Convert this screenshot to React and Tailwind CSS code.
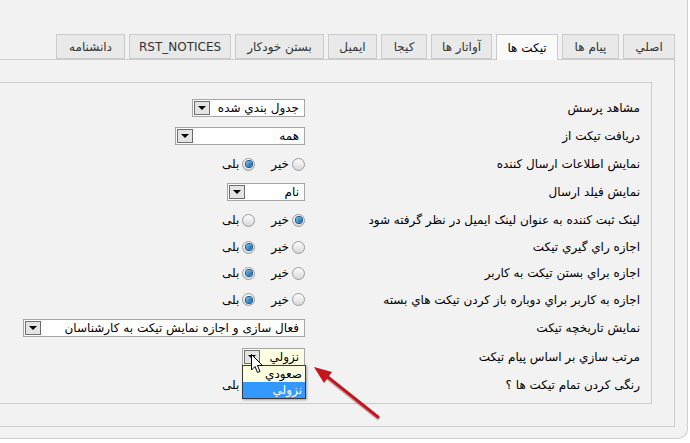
import React from "react";

const tabs = [
  { label: "اصلي", w: "w-[52px]" },
  { label: "پيام ها", w: "w-[57px]" },
  { label: "تیکت ها", w: "w-[62px]", active: true },
  { label: "آواتار ها", w: "w-[61px]" },
  { label: "کیجا", w: "w-[46px]" },
  { label: "ایمیل", w: "w-[49px]" },
  { label: "بستن خودکار", w: "w-[89px]" },
  { label: "RST_NOTICES", w: "w-[102px]" },
  { label: "دانشنامه", w: "w-[69px]" },
];

/* ================= SMALL CONTROLS ================= */
const Select = ({ value, width, yellow }) => (
  <div
    className={`flex h-[18px] items-center justify-between border border-[#a5a5a5] ${width} ${
      yellow ? "bg-[#ffffe1]" : "bg-white"
    }`}
  >
    <span className="pr-[5px] text-[12px] leading-none text-black">{value}</span>
    <span className="m-[1px] flex h-[14px] w-[16px] items-center justify-center border border-[#6f6f6f] bg-[#e4e4e4]">
      <svg width="8" height="4" viewBox="0 0 8 4">
        <polygon points="0,0 8,0 4,4" fill="#000" />
      </svg>
    </span>
  </div>
);

const Radio = ({ checked, hidden }) => (
  <span
    className={`flex h-[13px] w-[13px] items-center justify-center rounded-full border border-[#9a9a9a] bg-gradient-to-b from-[#fdfdfd] to-[#d8d8d8] ${
      hidden ? "invisible" : ""
    }`}
  >
    {checked && (
      <span className="h-[6px] w-[6px] rounded-full bg-gradient-to-br from-[#6ec1f5] to-[#0a5ea8] ring-1 ring-[#1b4f80]" />
    )}
  </span>
);

// covered: the open dropdown lies over the "no" option of the last row
const YesNo = ({ yes, covered }) => (
  <div className="flex items-center text-[12px] text-black">
    <Radio checked={!yes} hidden={covered} />
    <span className={`mr-[3px] ml-[16px] ${covered ? "invisible" : ""}`}>خير</span>
    <Radio checked={yes} hidden={covered} />
    <span className="mr-[3px]">بلی</span>
  </div>
);

const rows = [
  { label: "مشاهد پرسش", h: "h-[29px]", control: <Select value="جدول بندي شده" width="w-[113px]" /> },
  { label: "دریافت تیکت از", h: "h-[28px]", control: <Select value="همه" width="w-[130px]" /> },
  { label: "نمایش اطلاعات ارسال کننده", h: "h-[28px]", control: <YesNo yes /> },
  { label: "نمایش فیلد ارسال", h: "h-[28px]", control: <Select value="نام" width="w-[78px]" /> },
  { label: "لینک ثبت کننده به عنوان لینک ایمیل در نظر گرفته شود", h: "h-[28px]", control: <YesNo /> },
  { label: "اجازه راي گيري تيكت", h: "h-[26px]", control: <YesNo yes /> },
  { label: "اجازه براي بستن تيكت به كاربر", h: "h-[26px]", control: <YesNo yes /> },
  { label: "اجازه به كاربر براي دوباره باز كردن تيكت هاي بسته", h: "h-[27px]", control: <YesNo yes /> },
  {
    label: "نمایش تاریخچه تیکت",
    h: "h-[29px]",
    control: <Select value="فعال سازی و اجازه نمایش تیکت به کارشناسان" width="w-[282px]" />,
  },
  { label: "مرتب سازي بر اساس پيام تيكت", h: "h-[29px]", control: <Select value="نزولي" width="w-[63px]" yellow /> },
  { label: "رنگی کردن تمام تیکت ها ؟", h: "h-[28px]", control: <YesNo yes covered /> },
];

const App = () => {
  return (
    <div
      className="relative h-[443px] w-[690px] overflow-hidden bg-white"
      style={{ fontFamily: "Tahoma, 'DejaVu Sans', sans-serif" }}
    >
      {/* ================= OUTER BOX ================= */}
      <div className="h-[439px] w-[688px] rounded-br-[10px] border-r border-b border-[#cdcdcd] bg-[#f2f2f2] pt-[34px]">
        {/* ===== TABS ===== */}
        <div dir="rtl" className="flex h-[25px] w-[675px] gap-[4px]">
          {tabs.map((t) => (
            <div
              key={t.label}
              className={`flex items-center justify-center border border-[#cbcbcb] text-[12px] ${t.w} ${
                t.active
                  ? "h-[26px] border-b-0 bg-[#fafafa] text-black"
                  : "h-[25px] bg-[#e9e9e9] text-[#333]"
              }`}
            >
              {t.label}
            </div>
          ))}
        </div>

        {/* ===== TAB PANEL ===== */}
        <div className="h-[368px] w-[675px] border-t border-r border-b border-[#cdcdcd] pt-[22px]">
          <div
            dir="rtl"
            className="h-[322px] w-[652px] border-t border-r border-b border-[#cdcdcd] pt-[10px] pr-[11px]"
          >
            {rows.map((r) => (
              <div key={r.label} className={`flex items-center ${r.h}`}>
                <div className="w-[335px] shrink-0 whitespace-nowrap text-[12px] text-black">
                  {r.label}
                </div>
                {r.control}
              </div>
            ))}
          </div>
        </div>
      </div>

      {/* ================= OPEN DROPDOWN ================= */}
      <div
        dir="rtl"
        className="absolute top-[365px] left-[242px] w-[64px] border border-[#3a3a3a] bg-[#ffffe1] text-[12px] shadow-[1px_1px_2px_rgba(0,0,0,0.35)]"
      >
        <div className="h-[16px] pr-[3px] leading-[16px] text-black">صعودي</div>
        <div className="h-[16px] bg-[#3399ff] pr-[3px] leading-[16px] text-white">نزولي</div>
      </div>

      {/* ================= CURSOR ================= */}
      <svg className="absolute top-[354px] left-[251px]" width="13" height="21" viewBox="0 0 13 21">
        <path
          d="M0.5 0.5 L0.5 16 L4 12.5 L6.5 18.5 L9 17.5 L6.5 11.5 L11.5 11.5 Z"
          fill="#fff"
          stroke="#000"
          strokeWidth="1"
          strokeLinejoin="round"
        />
      </svg>

      {/* ================= RED ARROW ================= */}
      <svg className="absolute top-[360px] left-[308px]" width="80" height="64" viewBox="0 0 80 64">
        <line x1="71" y1="59" x2="18" y2="17" stroke="rgba(0,0,0,0.25)" strokeWidth="4" />
        <line x1="70" y1="57" x2="16" y2="14" stroke="#c4151c" strokeWidth="3" strokeLinecap="round" />
        <polygon points="6,7 24,12 16,23" fill="#c4151c" />
      </svg>
    </div>
  );
};

export default App;
